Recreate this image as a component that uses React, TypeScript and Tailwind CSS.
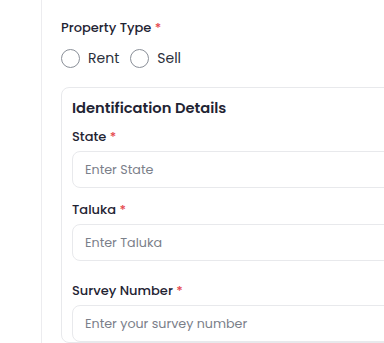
export default function App() {
  return (
    <div className="flex h-[343px] w-[384px] overflow-hidden bg-white font-['Poppins','Open_Sans',sans-serif] text-[#1f2433]">
      <div className="w-[41px] shrink-0" />
      <div className="min-w-0 flex-1 border-l border-[#ececef] pl-[19px] pt-[18px]">
        <label className="block text-[13px] font-medium leading-5">
          Property Type <span className="text-[#e5484d]">*</span>
        </label>
        <div className="mt-[8px] flex h-6 items-center gap-2 text-[14px] leading-6 text-[#2a2f3a]">
          <label className="flex items-center gap-2">
            <span className="h-[19px] w-[19px] rounded-full border border-[#8a8f98] bg-white" />
            Rent
          </label>
          <label className="ml-[3px] flex items-center gap-2">
            <span className="h-[19px] w-[19px] rounded-full border border-[#8a8f98] bg-white" />
            Sell
          </label>
        </div>
        <div className="mt-[17px] w-[360px] rounded-lg border border-[#e8e9ec] px-[10px] pt-2">
          <h3 className="text-[14.7px] font-semibold leading-6">Identification Details</h3>
          <Field label="State" placeholder="Enter State" className="mt-[7px]" />
          <Field label="Taluka" placeholder="Enter Taluka" className="mt-3" />
          <Field label="Survey Number" placeholder="Enter your survey number" className="mt-5" />
        </div>
      </div>
    </div>
  );
}

function Field({ label, placeholder, className }: { label: string; placeholder: string; className?: string }) {
  return (
    <div className={className}>
      <label className="block text-[13px] font-medium leading-5">
        {label} <span className="text-[#e5484d]">*</span>
      </label>
      <input
        placeholder={placeholder}
        className="mt-1 block h-[37px] w-full rounded-lg border border-[#e8e9ec] px-3 text-[12.7px] text-[#1f2433] outline-none placeholder:text-[#7b808a]"
      />
    </div>
  );
}
